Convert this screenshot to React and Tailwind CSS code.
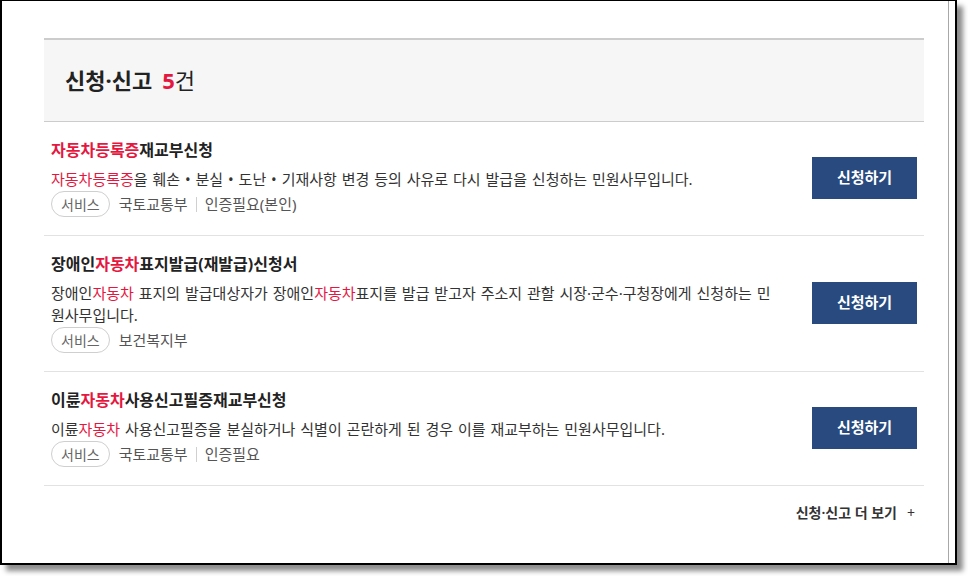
import React from "react";

const RED = "text-[#e5173f]";

function Row({ title, desc, org, auth }) {
  return (
    <div className="flex items-center justify-between border-b border-[#e2e2e2] pl-[7px] pr-[7px] pt-[16px] pb-[18px]">
      <div className="flex flex-col">
        <div className="text-[16px] leading-[24px] font-bold text-[#222]">{title}</div>
        <div className="mt-[6px] w-[730px] text-[15px] leading-[22px] text-[#333] [word-spacing:1px]">{desc}</div>
        <div className="mt-[1px] flex items-center">
          <span className="flex h-[26px] items-center rounded-full border border-[#cfcfcf] px-[9px] text-[14px] text-[#666]">서비스</span>
          <span className="ml-[9px] text-[15px] leading-[22px] text-[#555]">{org}</span>
          {auth && (
            <>
              <span className="mx-[8px] h-[15px] w-px bg-[#d0d0d0]" />
              <span className="text-[15px] leading-[22px] text-[#555]">{auth}</span>
            </>
          )}
        </div>
      </div>
      <button className="h-[42px] w-[105px] shrink-0 bg-[#284a7e] text-[15px] font-bold text-white">신청하기</button>
    </div>
  );
}

export default function App() {
  return (
    <div
      className="relative h-[576px] w-[968px] overflow-hidden bg-white"
      style={{ fontFamily: '"Noto Sans", "Noto Sans CJK KR", sans-serif' }}
    >
      <div className="flex h-[565px] w-[957px] border-x-2 border-b-2 border-t border-black bg-white shadow-[6px_6px_5px_rgba(0,0,0,0.45)]">
        <div className="h-full w-[947px] border-r border-[#a8a8a8] pl-[42px] pt-[37px]">
          <div className="w-[880px]">
            <div className="flex h-[84px] items-center border-t-2 border-b border-[#cccccc] bg-[#f6f6f6] pl-[21px]">
              <span className="text-[22px] font-bold text-[#222]">신청·신고</span>
              <span className={`ml-[10px] text-[22px] font-bold ${RED}`}>5</span>
              <span className="text-[22px] text-[#222]">건</span>
            </div>
            <Row
              title={<><span className={RED}>자동차등록증</span>재교부신청</>}
              desc={<><span className={RED}>자동차등록증</span>을 훼손 • 분실 • 도난 • 기재사항 변경 등의 사유로 다시 발급을 신청하는 민원사무입니다.</>}
              org="국토교통부"
              auth="인증필요(본인)"
            />
            <Row
              title={<>장애인<span className={RED}>자동차</span>표지발급(재발급)신청서</>}
              desc={<>장애인<span className={RED}>자동차</span> 표지의 발급대상자가 장애인<span className={RED}>자동차</span>표지를 발급 받고자 주소지 관할 시장·군수·구청장에게 신청하는 민원사무입니다.</>}
              org="보건복지부"
            />
            <Row
              title={<>이륜<span className={RED}>자동차</span>사용신고필증재교부신청</>}
              desc={<>이륜<span className={RED}>자동차</span> 사용신고필증을 분실하거나 식별이 곤란하게 된 경우 이를 재교부하는 민원사무입니다.</>}
              org="국토교통부"
              auth="인증필요"
            />
            <div className="flex justify-end pr-[9px] pt-[17px] leading-[20px]">
              <span className="text-[14px] font-semibold text-[#333]">신청·신고 더 보기</span>
              <span className="ml-[10px] text-[14px] text-[#333]">+</span>
            </div>
          </div>
        </div>
      </div>
    </div>
  );
}
